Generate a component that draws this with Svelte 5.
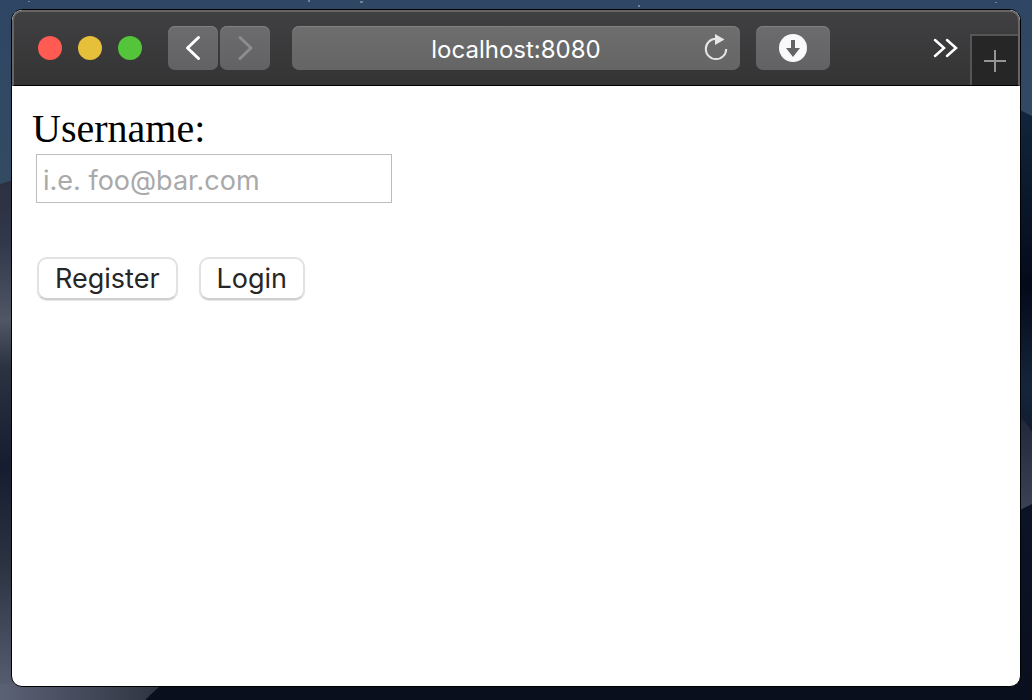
<script>
  let username = $state('');
</script>

<div class="desktop">
  <svg class="wallpaper" viewBox="0 0 1032 700" preserveAspectRatio="none" aria-hidden="true">
    <defs>
      <linearGradient id="sky" x1="0" y1="0" x2="0" y2="1">
        <stop offset="0" stop-color="#2f4664" />
        <stop offset="0.28" stop-color="#334b62" />
      </linearGradient>
      <linearGradient id="left-dune" x1="0" y1="180" x2="0" y2="700" gradientUnits="userSpaceOnUse">
        <stop offset="0" stop-color="#2d3040" />
        <stop offset="0.12" stop-color="#30384a" />
        <stop offset="0.27" stop-color="#505664" />
        <stop offset="0.36" stop-color="#2b3240" />
        <stop offset="0.55" stop-color="#161d30" />
        <stop offset="0.74" stop-color="#2b3240" />
        <stop offset="0.92" stop-color="#4c5365" />
        <stop offset="1" stop-color="#5b6275" />
      </linearGradient>
      <linearGradient id="right-dune" x1="0" y1="110" x2="0" y2="700" gradientUnits="userSpaceOnUse">
        <stop offset="0" stop-color="#12253c" />
        <stop offset="0.3" stop-color="#030a1a" />
        <stop offset="0.47" stop-color="#15253c" />
        <stop offset="0.6" stop-color="#0b1428" />
        <stop offset="1" stop-color="#0a0f1d" />
      </linearGradient>
      <linearGradient id="ridge" x1="0" y1="418" x2="0" y2="510" gradientUnits="userSpaceOnUse">
        <stop offset="0" stop-color="#20283a" />
        <stop offset="1" stop-color="#3b4254" />
      </linearGradient>
      <linearGradient id="foot" x1="0" y1="0" x2="160" y2="0" gradientUnits="userSpaceOnUse">
        <stop offset="0" stop-color="#5b6275" />
        <stop offset="1" stop-color="#2f3441" />
      </linearGradient>
    </defs>
    <rect width="1032" height="700" fill="url(#sky)" />
    <path d="M1010 105 L1032 116 V700 H140 V600 Z" fill="url(#right-dune)" />
    <path d="M0 184 L20 178 L200 600 L145 700 H0 Z" fill="url(#left-dune)" />
    <path d="M0 684 H162 L145 700 H0 Z" fill="url(#foot)" />
    <path d="M1018 416 Q1026 421 1032 432 V504 L1018 511 Z" fill="url(#ridge)" />
    <g fill="#71839c">
      <rect x="28" y="1" width="2" height="1" />
      <rect x="308" y="0" width="2" height="2" />
      <rect x="360" y="1" width="3" height="2" />
      <rect x="638" y="5" width="2" height="2" />
      <rect x="995" y="2" width="2" height="1" />
    </g>
  </svg>

  <div class="window">
    <header class="toolbar">
      <div class="lights">
        <button class="light close" aria-label="Close"></button>
        <button class="light minimize" aria-label="Minimize"></button>
        <button class="light expand" aria-label="Full screen"></button>
      </div>

      <nav class="history">
        <button class="tool" aria-label="Back">
          <svg width="50" height="44" viewBox="0 0 50 44"><path d="M30.5 11.5 L19.5 22 L30.5 32.5" stroke="#fff" /></svg>
        </button>
        <button class="tool" aria-label="Forward" disabled>
          <svg width="50" height="44" viewBox="0 0 50 44"><path d="M20 11.5 L31 22 L20 32.5" stroke="#8d8d8f" /></svg>
        </button>
      </nav>

      <div class="address tool">
        <span class="url">localhost:8080</span>
        <button class="reload" aria-label="Reload">
          <svg width="28" height="32" viewBox="0 0 28 32">
            <path d="M14 6.7 A10.2 10.2 0 1 0 24.2 16.900" fill="none" stroke="#e6e6e6" stroke-width="2" />
            <path d="M13 2 L22.500 7.500 L13 13 Z" fill="#e6e6e6" />
          </svg>
        </button>
      </div>

      <button class="tool downloads" aria-label="Downloads">
        <svg width="28" height="28" viewBox="0 0 28 28">
          <circle cx="14" cy="14" r="14" fill="#f9f9fb" />
          <path d="M12 6 H16 V14 H21 L14 23 L7 14 H12 Z" fill="#646466" />
        </svg>
      </button>

      <button class="more" aria-label="More">
        <svg width="26" height="24" viewBox="0 0 26 24">
          <path d="M2 4 L11 12 L2 20 M14 4 L23 12 L14 20" />
        </svg>
      </button>
      <button class="new-tab" aria-label="New tab">
        <svg width="22" height="22" viewBox="0 0 22 22"><path d="M0 11 H22 M11 0 V22" /></svg>
      </button>
    </header>

    <main>
      <form onsubmit={(event) => event.preventDefault()}>
        <label for="username">Username:</label>
        <input id="username" type="text" placeholder="i.e. foo@bar.com" bind:value={username} />
        <div class="actions">
          <button type="submit">Register</button>
          <button type="button">Login</button>
        </div>
      </form>
    </main>
  </div>
</div>

<style>
  :global(body) {
    margin: 0;
  }

  .desktop {
    position: relative;
    box-sizing: border-box;
    display: flex;
    min-height: 100vh;
    padding: 9px 11px 13px;
    font-family: Inter, "Liberation Sans", sans-serif;
  }

  .wallpaper {
    position: absolute;
    inset: 0;
    width: 100%;
    height: 100%;
  }

  .window {
    position: relative;
    flex: 1;
    display: flex;
    flex-direction: column;
    min-width: 0;
    overflow: hidden;
    border: 1px solid #000;
    border-radius: 11px;
    background: #fff;
  }

  button {
    margin: 0;
    padding: 0;
    border: 0;
    background: none;
    font-family: inherit;
  }

  .toolbar {
    box-sizing: border-box;
    display: flex;
    align-items: flex-start;
    height: 76px;
    padding: 14px 0 0 24px;
    border: solid #666668;
    border-width: 2px 2px 0 2px;
    border-bottom: 1px solid #000;
    border-radius: 10px 10px 0 0;
    background: linear-gradient(#404042, #343435);
  }

  .lights {
    display: flex;
    gap: 16px;
    margin: 10px 26px 0 0;
  }

  .light {
    width: 24px;
    height: 24px;
    border-radius: 50%;
  }

  .close {
    background: #ff5b52;
  }

  .minimize {
    background: #e6c03a;
  }

  .expand {
    background: #54c43b;
  }

  .history {
    display: flex;
    gap: 2px;
    margin-right: 22px;
  }

  .tool {
    height: 44px;
    border-radius: 7px;
    background: linear-gradient(#6c6c6e, #626264);
    box-shadow: inset 0 1px #808082;
  }

  .history .tool {
    width: 50px;
  }

  .history svg {
    display: block;
    fill: none;
    stroke-width: 3;
    stroke-linecap: round;
    stroke-linejoin: round;
  }

  .address {
    flex: 1;
    display: grid;
    grid-template-columns: 38px 1fr 38px;
    align-items: center;
    min-width: 0;
    background: linear-gradient(#6e6e6e, #656566);
  }

  .url {
    grid-column: 2;
    padding-top: 4px;
    color: #fff;
    font-size: 24px;
    line-height: 40px;
    text-align: center;
  }

  .reload {
    height: 32px;
  }

  .reload svg,
  .more svg,
  .new-tab svg,
  .downloads svg {
    display: block;
  }

  .downloads {
    display: grid;
    place-items: center;
    width: 74px;
    margin: 0 103px 0 16px;
  }

  .more {
    margin: 10px 11px 0 0;
  }

  .more path {
    fill: none;
    stroke: #fff;
    stroke-width: 2.5;
    stroke-linecap: round;
  }

  .new-tab {
    box-sizing: border-box;
    align-self: flex-end;
    display: grid;
    place-items: center;
    width: 48px;
    height: 51px;
    border: solid #555557;
    border-width: 2px 0 0 2px;
    background: #262627;
  }

  .new-tab path {
    stroke: #949494;
    stroke-width: 2;
  }

  main {
    padding: 20px;
  }

  form {
    display: flex;
    flex-direction: column;
    align-items: flex-start;
  }

  label {
    color: #000;
    font-family: "Liberation Serif", serif;
    font-size: 40px;
    line-height: 46px;
  }

  input {
    box-sizing: border-box;
    width: 356px;
    max-width: 100%;
    height: 49px;
    margin: 2px 4px 0;
    padding: 4px 6px 0;
    border: 1px solid #bcbcbc;
    border-radius: 0;
    background: #fff;
    color: #000;
    font-family: inherit;
    font-size: 27px;
  }

  input::placeholder {
    color: #a9a9a9;
    opacity: 1;
  }

  .actions {
    display: flex;
    gap: 21px;
    margin: 54px 5px 0;
  }

  .actions button {
    height: 43px;
    padding: 0 16px;
    border: 2px solid #e2e2e2;
    border-bottom-color: #cfcfcf;
    border-radius: 10px;
    background: #fff;
    box-shadow: 0 1px 1px #e4e4e4;
    color: #262626;
    font-size: 27px;
    line-height: 40px;
  }
</style>
